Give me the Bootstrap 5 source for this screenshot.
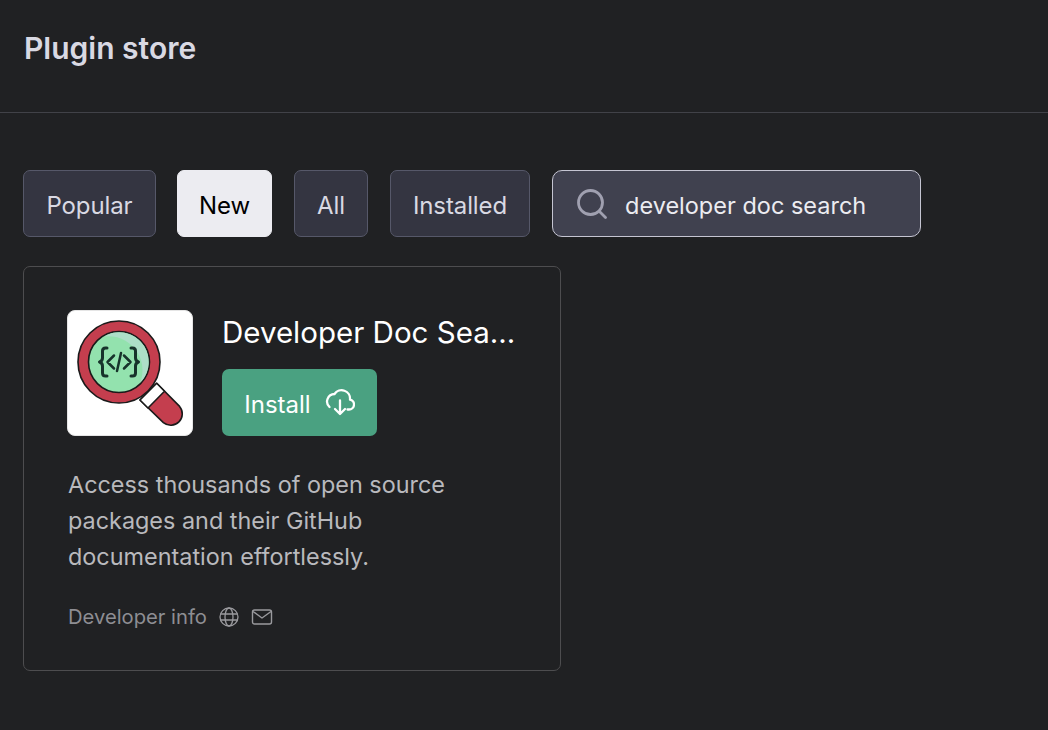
<!DOCTYPE html>
<html lang="en">
<head>
<meta charset="utf-8">
<title>Plugin store</title>
<link href="https://cdn.jsdelivr.net/npm/bootstrap@5.3.0/dist/css/bootstrap.min.css" rel="stylesheet">
<style>
html,body{height:730px;overflow:hidden}
body{background:#202123;font-family:Inter,"Liberation Sans",sans-serif;color:#ececf1}
.store-head{height:113px;border-bottom:1px solid #414248;padding:29px 24px 0}
.store-title{font-size:30px;font-weight:600;line-height:38px;color:#d9d9e3;margin:0}
.store-body{padding:57px 23px 0}
.store-filters{height:67px}
.fbtn{height:67px;padding:5px 0 0;font-size:24px;letter-spacing:-.1px;line-height:1;border:1px solid #565869;border-radius:7px;background:#343541;color:#d9d9e3;flex:none}
.fbtn:hover,.fbtn:active{background:#343541;color:#d9d9e3;border-color:#565869}
.fbtn-on,.fbtn-on:hover{background:#ececf1;border-color:#ececf1;color:#000}
.w-popular{width:133px;margin-right:21px}
.w-new{width:95px;margin-right:22px}
.w-all{width:74px;margin-right:22px}
.w-installed{width:140px;margin-right:22px}
.searchbox{width:369px;height:67px;background:#40414f;border:1px solid #c5c5d2;border-radius:10px;padding-left:24px;gap:18px}
.searchbox svg{flex:none}
.searchtext{background:transparent;border:0;outline:0;padding:5px 0 0;width:300px;font-size:23.5px;color:#ececf1}
.plugin-tile{width:538px;height:405px;margin-top:29px;border:1px solid #4d4d4f;border-radius:7px;padding:43px 43px 0;background:transparent}
.logo-box{width:126px;height:126px;background:#fff;border:1px solid #e5e5e5;border-radius:8px;flex:none}
.tile-top{gap:29px}
.tile-name{font-size:29.5px;line-height:44px;color:#fff;width:296px;white-space:nowrap;overflow:hidden;text-overflow:ellipsis;margin:0;font-weight:400}
.install{width:155px;height:67px;margin-top:15px;padding:5px 0 0;background:#4aa181;border:0;border-radius:7px;color:#fff;font-size:24px;gap:14px}
.install svg{margin-top:-5px}
.install:hover,.install:active{background:#4aa181;color:#fff}
.tile-desc{margin:31px 0 0 1px;font-size:23.4px;line-height:36px;color:#b9b9bd;width:420px}
.devinfo{margin:27px 0 0 1px;font-size:20.200px;line-height:30px;color:#8e8e93;gap:12px}
</style>
</head>
<body>
<header class="store-head"><h1 class="store-title">Plugin store</h1></header>
<main class="store-body">
  <div class="d-flex align-items-center store-filters">
    <button type="button" class="btn fbtn w-popular">Popular</button>
    <button type="button" class="btn fbtn fbtn-on w-new">New</button>
    <button type="button" class="btn fbtn w-all">All</button>
    <button type="button" class="btn fbtn w-installed">Installed</button>
    <div class="d-flex align-items-center searchbox">
      <svg width="30" height="30" viewBox="0 0 30 30" fill="none" stroke="#a0a0b0" stroke-width="2.800" stroke-linecap="round"><circle cx="13.500" cy="13.500" r="12"/><path d="M22.500 22.500l6 6"/></svg>
      <input class="searchtext" type="text" value="developer doc search" aria-label="Search">
    </div>
  </div>
  <article class="plugin-tile">
    <div class="d-flex tile-top">
      <div class="logo-box d-flex align-items-center justify-content-center">
        <svg width="124" height="124" viewBox="0 0 124 124">
          <g stroke="#1a1a1a" stroke-width="1.600" stroke-linejoin="round">
            <path d="M88.700 72.300 L111.600 95.400 A11.500 11.500 0 0 1 95.400 111.600 L72 89 Z" fill="#c43e4e"/>
            <path d="M88.700 72.300 L96.500 80.300 L80 97 L72 89 Z" fill="#fff"/>
            <circle cx="51" cy="51" r="41" fill="#c43e4e"/>
            <circle cx="51" cy="51" r="30.500" fill="#93e2ae"/>
          </g>
          <path d="M51 21.300 A29.700 29.700 0 0 1 72 72 A34 34 0 0 0 36 25.500 A29.700 29.700 0 0 1 51 21.300Z" fill="#addfc8"/>
          <g fill="none" stroke="#17332b" stroke-width="3" stroke-linecap="round" stroke-linejoin="round">
            <path d="M39 37h-1.500q-3 0-3 3v7q0 3-3 4q3 1 3 4v7q0 3 3 3h1.500"/>
            <path d="M63 37h1.500q3 0 3 3v7q0 3 3 4q-3 1-3 4v7q0 3-3 3h-1.500"/>
            <path d="M46 44.500l-6.500 6.500 6.500 6.500M56 44.500l6.500 6.500-6.500 6.500M53 42l-4 18" stroke-width="2.500"/>
          </g>
        </svg>
      </div>
      <div>
        <h2 class="tile-name">Developer Doc Search</h2>
        <button type="button" class="btn install d-flex align-items-center justify-content-center">Install
          <svg width="30" height="27" viewBox="0 0 30 27" fill="none" stroke="#fff" stroke-width="2.300" stroke-linecap="round" stroke-linejoin="round"><path d="M22.500 20.500h1.500a5 5 0 0 0 1-9.900A8.500 8.500 0 0 0 9.500 5 7.500 7.500 0 0 0 4.500 18"/><path d="M15 11.500v13.500M10 20l5 5 5-5"/></svg>
        </button>
      </div>
    </div>
    <p class="tile-desc">Access thousands of open source packages and their GitHub documentation effortlessly.</p>
    <div class="d-flex align-items-center devinfo">
      <span>Developer info</span>
      <svg width="20" height="20" viewBox="0 0 20 20" fill="none" stroke="#9a9a9e" stroke-width="1.300"><circle cx="10" cy="10" r="9"/><ellipse cx="10" cy="10" rx="4" ry="9"/><path d="M1.500 7h17M1.500 13h17"/></svg>
      <svg width="22" height="18" viewBox="0 0 22 18" fill="none" stroke="#9a9a9e" stroke-width="1.400" stroke-linejoin="round"><rect x="1.500" y="2" width="19" height="14" rx="2"/><path d="M2 3.500l9 6.500 9-6.500"/></svg>
    </div>
  </article>
</main>
<script src="https://cdn.jsdelivr.net/npm/bootstrap@5.3.0/dist/js/bootstrap.bundle.min.js"></script>
</body>
</html>
